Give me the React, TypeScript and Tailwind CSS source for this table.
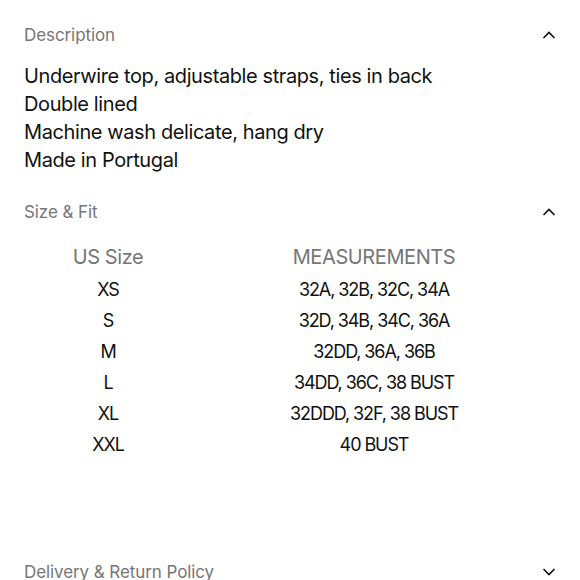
import React from "react";

const Chevron = ({ up }: { up: boolean }) => (
  <svg width="14" height="8" viewBox="0 0 14 8" fill="none" className="shrink-0">
    {up ? (
      <path d="M1.5 7L7 1.5L12.5 7" stroke="#111" strokeWidth="1.6" />
    ) : (
      <path d="M1.5 1L7 6.5L12.5 1" stroke="#111" strokeWidth="1.6" />
    )}
  </svg>
);

const Header = ({ title, up }: { title: string; up: boolean }) => (
  <div className="flex items-center justify-between pr-[24px] h-[24px]">
    <span className="text-[17px] leading-[24px] text-[#767676] tracking-[-0.005em]">{title}</span>
    <Chevron up={up} />
  </div>
);

const rows: [string, string][] = [
  ["XS", "32A, 32B, 32C, 34A"],
  ["S", "32D, 34B, 34C, 36A"],
  ["M", "32DD, 36A, 36B"],
  ["L", "34DD, 36C, 38 BUST"],
  ["XL", "32DDD, 32F, 38 BUST"],
  ["XXL", "40 BUST"],
];

export default function App() {
  return (
    <div
      className="w-[580px] h-[580px] overflow-hidden bg-white pl-6 text-[#111]"
      style={{ fontFamily: "Inter, 'Liberation Sans', sans-serif" }}
    >
      <div className="pt-[23px]">
        <Header title="Description" up />
      </div>
      <div className="mt-[15px] text-[20px] leading-[28px] tracking-[-0.02em]">
        <div>Underwire top, adjustable straps, ties in back</div>
        <div>Double lined</div>
        <div>Machine wash delicate, hang dry</div>
        <div>Made in Portugal</div>
      </div>
      <div className="mt-[26px]">
        <Header title="Size & Fit" up />
      </div>
      <div className="mt-[16px] pr-6 grid grid-cols-[168px_1fr] text-center">
        <div className="text-[20px] leading-[34px] text-[#767676] tracking-[-0.02em]">US Size</div>
        <div className="text-[20px] leading-[34px] text-[#767676] tracking-[-0.02em]">MEASUREMENTS</div>
        {rows.map(([s, m]) => (
          <React.Fragment key={s}>
            <div className="text-[18px] leading-[31px] tracking-[-0.06em]">{s}</div>
            <div className="text-[18px] leading-[31px] tracking-[-0.06em]">{m}</div>
          </React.Fragment>
        ))}
      </div>
      <div className="mt-[100px]">
        <Header title="Delivery & Return Policy" up={false} />
      </div>
    </div>
  );
}
